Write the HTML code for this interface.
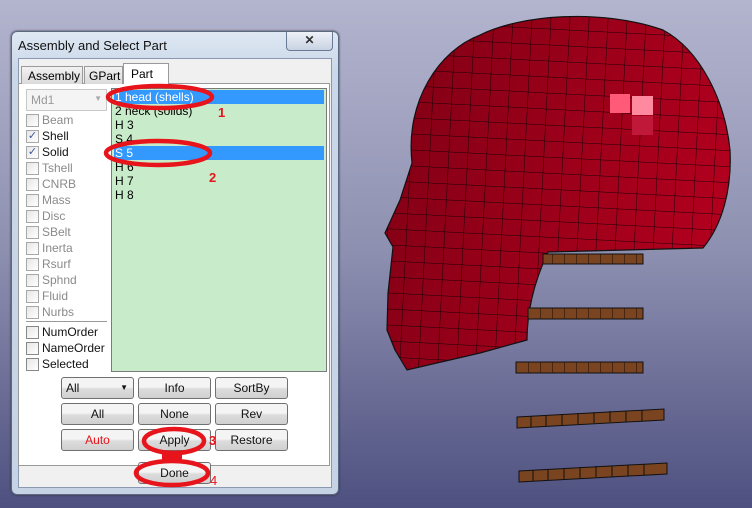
<!DOCTYPE html>
<html><head><meta charset="utf-8"><style>
*{margin:0;padding:0;box-sizing:border-box}
body{width:752px;height:508px;overflow:hidden;position:relative;font-family:"Liberation Sans",sans-serif;font-size:12px;background:linear-gradient(#b3b5cf,#8d8fb0 50%,#4e5080)}
.a{position:absolute}
.dlg{left:11px;top:31px;width:328px;height:464px;border:1px solid #5a6a85;border-radius:6px;background:linear-gradient(#dfe8f3,#c9d7e8 40px,#c5d3e5);box-shadow:0 0 2px #333}
.client{left:6px;top:26px;width:314px;height:430px;background:#f0f0f0;border:1px solid #8a99b0}
.panel{left:18px;top:83px;width:312px;height:383px;background:#fff;border:1px solid #9a9a9a}
.tab{top:66px;height:18px;border:1px solid #9a9a9a;border-bottom:none;background:linear-gradient(#f2f2f2,#dadada);padding:2px 0 0 6px}
.cb{left:26px;width:13px;height:13px;border:1px solid #a8a8a8;background:linear-gradient(135deg,#e6e6e6,#fff)}
.cbl{left:42px;color:#8a8a8a;line-height:14px}
.btn{width:73px;height:22px;border:1px solid #707070;border-radius:3px;background:linear-gradient(#f4f4f4 45%,#dcdcdc 55%,#d0d0d0);text-align:center;line-height:20px;color:#111}
.list{left:111px;top:88px;width:216px;height:284px;background:#c8ecc9;border:1px solid #7a7a7a}
.row{left:2px;width:210px;height:14px;line-height:14px;padding-left:1px}
.num{color:#e8141c;font-weight:bold;font-size:13px}
</style></head><body>
<svg class="a" style="left:0;top:0" width="752" height="508">
<defs>
<linearGradient id="hg" x1="0" y1="0" x2="1" y2="0.3"><stop offset="0" stop-color="#7e0014"/><stop offset="1" stop-color="#b0001e"/></linearGradient>
<pattern id="gp" width="19" height="16" patternUnits="userSpaceOnUse" patternTransform="rotate(3)"><path d="M0 0H19M0 0V16" stroke="#1a0005" stroke-width="1" fill="none"/></pattern>
<pattern id="bp" width="12" height="20" patternUnits="userSpaceOnUse"><path d="M0 0V20" stroke="#1a0800" stroke-width="1"/></pattern>
<clipPath id="hc"><path d="M412 163 C405 100 440 50 480 35 C520 15 600 8 663 30 C700 50 725 100 730 150 C732 190 722 225 703 248 L548 252 C535 280 527 310 527 340 L480 353 L407 370 L395 350 L387 330 L388 293 L393 247 L385 233 L400 200 Z"/></clipPath>
</defs>
<g clip-path="url(#hc)"><rect x="380" y="0" width="360" height="380" fill="url(#hg)"/>
<rect x="380" y="0" width="360" height="380" fill="url(#gp)"/>
<rect x="610" y="94" width="20" height="19" fill="#ff5a78"/><rect x="632" y="96" width="21" height="19" fill="#ff8aa0"/><rect x="632" y="116" width="21" height="19" fill="#c01838"/>
</g>
<path d="M412 163 C405 100 440 50 480 35 C520 15 600 8 663 30 C700 50 725 100 730 150 C732 190 722 225 703 248 L548 252 C535 280 527 310 527 340 L480 353 L407 370 L395 350 L387 330 L388 293 L393 247 L385 233 L400 200 Z" fill="none" stroke="#111" stroke-width="1.2"/>
<g stroke="#111" stroke-width="1">
<rect x="543" y="254" width="100" height="10" fill="#7a4420"/><rect x="543" y="254" width="100" height="10" fill="url(#bp)"/>
<rect x="528" y="308" width="115" height="11" fill="#7a4420"/><rect x="528" y="308" width="115" height="11" fill="url(#bp)"/>
<rect x="516" y="362" width="127" height="11" fill="#7a4420"/><rect x="516" y="362" width="127" height="11" fill="url(#bp)"/>
<path d="M517 417 L664 409 L664 420 L517 428 Z" fill="#7a4420"/>
<path d="M531 416V427M546 415V426M562 414V425M578 413V424M594 412V423M610 411V422M626 411V422M642 410V421" />
<path d="M519 471 L667 463 L667 474 L519 482 Z" fill="#7a4420"/>
<path d="M533 470V481M548 469V480M564 468V479M580 467V478M596 466V477M612 466V477M628 465V476M644 464V475"/>
</g>
</svg>
<div class="a dlg">
<div class="a" style="left:6px;top:6px;font-size:13px;color:#111">Assembly and Select Part</div>
<div class="a" style="left:274px;top:0;width:47px;height:19px;border:1px solid #6a7a95;border-top:none;border-radius:0 0 4px 4px;background:linear-gradient(#eef2f8,#c8d2e2);text-align:center;font-weight:bold;color:#333;line-height:17px">✕</div>
<div class="a client"></div>
</div>
<div class="a panel"></div>
<div class="a tab" style="left:21px;width:62px">Assembly</div>
<div class="a tab" style="left:84px;width:39px;padding-left:4px">GPart</div>
<div class="a" style="left:123px;top:63px;width:46px;height:21px;border:1px solid #9a9a9a;border-bottom:none;background:#fff;padding:3px 0 0 7px">Part</div>
<div class="a" style="left:26px;top:89px;width:81px;height:22px;border:1px solid #c8c8c8;background:#f4f4f4;color:#999;padding:3px 4px">Md1<span style="position:absolute;right:4px;top:4px;font-size:8px;color:#aaa">▼</span></div>
<div class="a cb" style="top:114px"></div><div class="a cbl" style="top:113px">Beam</div>
<div class="a cb" style="top:130px;color:#3a5aa0;font-size:11px;line-height:11px;text-align:center">✓</div><div class="a cbl" style="top:129px;color:#111">Shell</div>
<div class="a cb" style="top:146px;color:#3a5aa0;font-size:11px;line-height:11px;text-align:center">✓</div><div class="a cbl" style="top:145px;color:#111">Solid</div>
<div class="a cb" style="top:162px"></div><div class="a cbl" style="top:161px">Tshell</div>
<div class="a cb" style="top:178px"></div><div class="a cbl" style="top:177px">CNRB</div>
<div class="a cb" style="top:194px"></div><div class="a cbl" style="top:193px">Mass</div>
<div class="a cb" style="top:210px"></div><div class="a cbl" style="top:209px">Disc</div>
<div class="a cb" style="top:226px"></div><div class="a cbl" style="top:225px">SBelt</div>
<div class="a cb" style="top:242px"></div><div class="a cbl" style="top:241px">Inerta</div>
<div class="a cb" style="top:258px"></div><div class="a cbl" style="top:257px">Rsurf</div>
<div class="a cb" style="top:274px"></div><div class="a cbl" style="top:273px">Sphnd</div>
<div class="a cb" style="top:290px"></div><div class="a cbl" style="top:289px">Fluid</div>
<div class="a cb" style="top:306px"></div><div class="a cbl" style="top:305px">Nurbs</div>
<div class="a" style="left:26px;top:321px;width:81px;height:1px;background:#999"></div>
<div class="a cb" style="top:326px;border-color:#888"></div><div class="a cbl" style="top:325px;color:#111">NumOrder</div>
<div class="a cb" style="top:342px;border-color:#888"></div><div class="a cbl" style="top:341px;color:#111">NameOrder</div>
<div class="a cb" style="top:358px;border-color:#888"></div><div class="a cbl" style="top:357px;color:#111">Selected</div>
<div class="a list">
<div class="a row" style="top:1px;background:#3399ff;color:#fff">1 head (shells)</div>
<div class="a row" style="top:15px">2 neck (solids)</div>
<div class="a row" style="top:29px">H 3</div>
<div class="a row" style="top:43px">S 4</div>
<div class="a row" style="top:57px;background:#3399ff;color:#fff">S 5</div>
<div class="a row" style="top:71px">H 6</div>
<div class="a row" style="top:85px">H 7</div>
<div class="a row" style="top:99px">H 8</div>
</div>
<div class="a btn" style="left:61px;top:377px;text-align:left;padding-left:4px">All<span style="position:absolute;right:5px;top:0;font-size:8px">▼</span></div>
<div class="a btn" style="left:138px;top:377px">Info</div>
<div class="a btn" style="left:215px;top:377px">SortBy</div>
<div class="a btn" style="left:61px;top:403px">All</div>
<div class="a btn" style="left:138px;top:403px">None</div>
<div class="a btn" style="left:215px;top:403px">Rev</div>
<div class="a btn" style="left:61px;top:429px;color:#e8141c">Auto</div>
<div class="a btn" style="left:138px;top:429px">Apply</div>
<div class="a btn" style="left:215px;top:429px">Restore</div>
<div class="a btn" style="left:138px;top:462px">Done</div>
<svg class="a" style="left:0;top:0" width="340" height="508">
<g fill="none" stroke="#e8141c" stroke-width="4.5">
<ellipse cx="160" cy="97" rx="52" ry="11"/>
<ellipse cx="158" cy="153" rx="52" ry="12"/>
<ellipse cx="174" cy="441" rx="30" ry="12"/>
<ellipse cx="172" cy="473" rx="36" ry="12"/>
</g>
<rect x="162" y="452" width="20" height="9" fill="#e8141c"/>
</svg>
<div class="a num" style="left:218px;top:105px">1</div>
<div class="a num" style="left:209px;top:170px">2</div>
<div class="a num" style="left:209px;top:433px">3</div>
<div class="a num" style="left:210px;top:473px;font-weight:normal">4</div>
</body></html>
